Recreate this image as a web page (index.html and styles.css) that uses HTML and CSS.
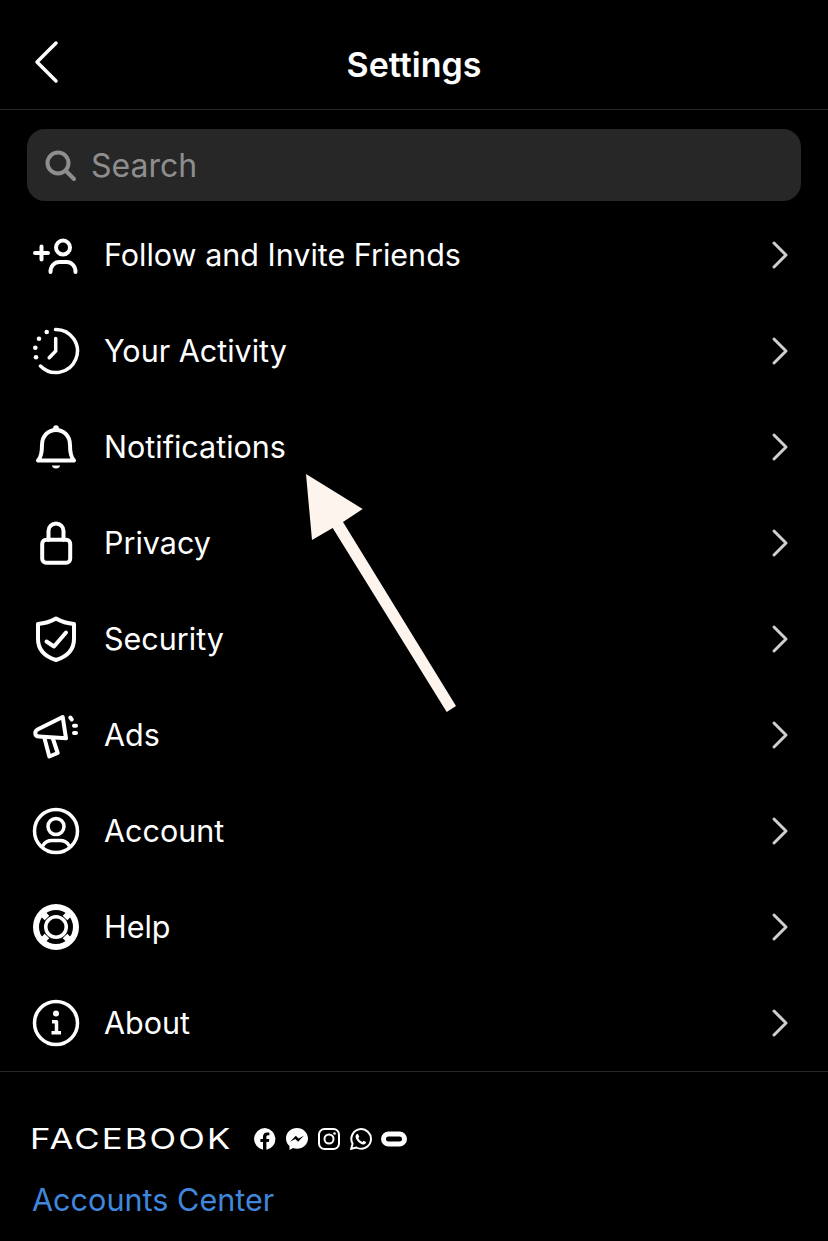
FILE: index.html
```html
<!DOCTYPE html>
<html lang="en">
<head>
    <meta charset="UTF-8">
    <title>Settings</title>
    <link rel="stylesheet" href="styles.css">
</head>
<body>
    <div class="screen">
        <header class="topbar">
            <svg class="back" width="30" height="48" viewBox="0 0 30 48"><path d="M25 4 6 23l19 19"/></svg>
            <h1 class="title">Settings</h1>
        </header>

        <div class="search">
            <svg class="search-icon" width="34" height="34" viewBox="0 0 34 34"><circle cx="15" cy="15" r="10.5"/><path d="M23 23l8 8"/></svg>
            <span class="search-text">Search</span>
        </div>

        <ul class="menu">
            <li class="row">
                <svg class="ico heavy" viewBox="0 0 48 48"><path d="M3 22h13M9.500 15.500v13"/><circle cx="31" cy="16.500" r="7"/><path d="M18.500 41c0-6 4-10 9-10h7c5 0 9 4 9 10"/></svg>
                <span class="label">Follow and Invite Friends</span>
                <svg class="chev" width="18" height="30" viewBox="0 0 18 30"><path d="M3 3l12 12L3 27"/></svg>
            </li>
            <li class="row">
                <svg class="ico" viewBox="0 0 48 48"><path d="M23.500 2.500A21.500 21.500 0 1 1 8.500 39"/><path d="M23.700 11.500v12.500l-6.500 6.700"/><g class="dots"><circle cx="14.700" cy="5" r="2.300"/><circle cx="7" cy="11.700" r="2.300"/><circle cx="3.300" cy="20.700" r="2.300"/><circle cx="4" cy="30.300" r="2.300"/></g></svg>
                <span class="label">Your Activity</span>
                <svg class="chev" width="18" height="30" viewBox="0 0 18 30"><path d="M3 3l12 12L3 27"/></svg>
            </li>
            <li class="row">
                <svg class="ico heavy" viewBox="0 0 48 48"><path d="M6 37.500h36M6 37.500c3-3 4-8 4-15.500C10 13 16 7 24 7s14 6 14 15c0 7.500 1 12.500 4 15.500"/><g class="dots"><circle cx="24" cy="5" r="2.800"/><path d="M20 42.500h8c0 2-2 3-4 3s-4-1-4-3z"/></g></svg>
                <span class="label">Notifications</span>
                <svg class="chev" width="18" height="30" viewBox="0 0 18 30"><path d="M3 3l12 12L3 27"/></svg>
            </li>
            <li class="row">
                <svg class="ico heavy" viewBox="0 0 48 48"><rect x="10.200" y="20.800" width="28" height="23" rx="4"/><path d="M16.500 20.800V12a7.500 7.500 0 0 1 15 0v8.800"/></svg>
                <span class="label">Privacy</span>
                <svg class="chev" width="18" height="30" viewBox="0 0 18 30"><path d="M3 3l12 12L3 27"/></svg>
            </li>
            <li class="row">
                <svg class="ico heavy" viewBox="0 0 48 48"><path d="M24 3.500c6 3.500 12 5 18 5.500v15c0 11-7 17.500-18 21C13 41.500 6 35 6 24V9c6-.5 12-2 18-5.500z"/><path d="M14.500 26.500l7.500 5 12-14"/></svg>
                <span class="label">Security</span>
                <svg class="chev" width="18" height="30" viewBox="0 0 18 30"><path d="M3 3l12 12L3 27"/></svg>
            </li>
            <li class="row">
                <svg class="ico heavy" viewBox="0 0 48 48"><path d="M30.700 6 6 18.300c-4 2.200-3.500 7 1 7.300l27 1.700z"/><path d="M12.300 26.500l5 19 8.400-3.500-5-15"/><path d="M38.300 6.500l1.500 2M42 14.700h2M42 22h2"/></svg>
                <span class="label">Ads</span>
                <svg class="chev" width="18" height="30" viewBox="0 0 18 30"><path d="M3 3l12 12L3 27"/></svg>
            </li>
            <li class="row">
                <svg class="ico" viewBox="0 0 48 48"><circle cx="24" cy="24" r="21.500"/><circle cx="24" cy="19.500" r="8"/><path d="M11 38.500c2-3.500 6-5 9-5h8c3 0 7 1.500 9 5"/></svg>
                <span class="label">Account</span>
                <svg class="chev" width="18" height="30" viewBox="0 0 18 30"><path d="M3 3l12 12L3 27"/></svg>
            </li>
            <li class="row">
                <svg class="ico" viewBox="0 0 48 48"><circle class="ring-out" cx="24" cy="24" r="20"/><circle class="ring-in" cx="24" cy="24" r="10.250"/><path class="spoke" d="M15 15l-6-6M33 15l6-6M15 33l-6 6M33 33l6 6"/></svg>
                <span class="label">Help</span>
                <svg class="chev" width="18" height="30" viewBox="0 0 18 30"><path d="M3 3l12 12L3 27"/></svg>
            </li>
            <li class="row">
                <svg class="ico" viewBox="0 0 48 48"><circle cx="24" cy="24" r="21.500"/><circle class="fill" cx="24" cy="14.500" r="3"/><path class="thick" d="M20 22.700h4.500v11M19.500 33.700h9.500"/></svg>
                <span class="label">About</span>
                <svg class="chev" width="18" height="30" viewBox="0 0 18 30"><path d="M3 3l12 12L3 27"/></svg>
            </li>
        </ul>

        <footer class="foot">
            <div class="brand">
                <span class="wordmark">FACEBOOK</span>
                <div class="apps">
                    <svg width="22" height="22" viewBox="0 0 22 22"><path class="solid" d="M11 0a11 11 0 0 0-2 21.800v-7.700H6.400V11H9V8.700c0-2.700 1.600-4.200 4-4.200 1.200 0 2.400.2 2.400.2v2.600h-1.300c-1.300 0-1.700.8-1.700 1.600V11h2.900l-.5 3.100h-2.400v7.700A11 11 0 0 0 11 0z"/></svg>
                    <svg width="22" height="22" viewBox="0 0 22 22"><path class="solid" fill-rule="evenodd" d="M11 0C4.900 0 0 4.600 0 10.500c0 3.100 1.300 5.800 3.500 7.600V22l3.500-1.900c1.300.4 2.600.6 4 .6 6.100 0 11-4.600 11-10.200S17.100 0 11 0zm1.100 13.800L9.300 10.900l-5.200 2.900 5.700-6.100 2.800 2.900 5.200-2.900z"/></svg>
                    <svg width="22" height="22" viewBox="0 0 22 22"><rect class="line" x="1" y="1" width="20" height="20" rx="5.500"/><circle class="line" cx="11" cy="11" r="4.500"/><circle class="solid" cx="16.500" cy="5.500" r="1.300"/></svg>
                    <svg width="22" height="22" viewBox="0 0 22 22"><path class="line" d="M1.200 20.800l1.400-5.100A9.800 9.800 0 1 1 6.400 19.500z"/><path class="solid" d="M7.800 5.800c-.5 0-1 .2-1.500.8-.6.700-.8 1.600-.7 2.500.3 2.700 3.800 6.600 7 7.300 1.100.2 2.100 0 2.800-.7.400-.4.600-1 .6-1.600l-2.500-1.300-1.100 1.200c-1.800-.6-3.400-2.200-4.100-4l1-1.200z"/></svg>
                    <svg class="oculus-logo" width="26" height="22" viewBox="0 0 26 22"><rect class="oculus" x="2.500" y="6" width="21" height="10" rx="5"/></svg>
                </div>
            </div>
            <a class="center-link">Accounts Center</a>
        </footer>

        <svg class="pointer" width="828" height="1241" viewBox="0 0 828 1241"><path d="M306 474 362.700 509 343 522 456 706 446.700 712 332.700 528 312 540z"/></svg>
    </div>
</body>
</html>
```

FILE: styles.css
```css
html,
body {
  margin: 0;
  padding: 0;
  background: #000;
}
.screen {
  position: relative;
  width: 828px;
  height: 1241px;
  overflow: hidden;
  background: #000;
  color: #fff;
  font-family: "Inter", "Liberation Sans", sans-serif;
}

/* top bar */
.topbar {
  box-sizing: border-box;
  height: 110px;
  border-bottom: 1px solid #262626;
  display: grid;
  grid-template-columns: 1fr auto 1fr;
  align-items: center;
  padding: 20px 32px 0;
}
.back {
  fill: none;
  stroke: #fff;
  stroke-width: 3.5;
  stroke-linecap: round;
  stroke-linejoin: round;
  margin-bottom: 4px;
  margin-left: -1px;
}
.title {
  grid-column: 2;
  margin: 0;
  font-size: 34px;
  font-weight: 600;
}

/* search */
.search {
  height: 72px;
  margin: 19px 27px 6px;
  border-radius: 18px;
  background: #272727;
  display: flex;
  align-items: center;
  gap: 14px;
  padding-left: 16px;
}
.search-icon {
  fill: none;
  stroke: #8e8e8e;
  stroke-width: 4;
  stroke-linecap: round;
}
.search-text {
  font-size: 32px;
  color: #8e8e8e;
}

/* menu */
.menu {
  list-style: none;
  margin: 0;
  padding: 0;
  border-bottom: 1px solid #262626;
}
.row {
  height: 96px;
  display: flex;
  align-items: center;
  padding: 0 39px 0 32px;
}
.ico {
  width: 48px;
  height: 48px;
  flex: none;
  fill: none;
  stroke: #fff;
  stroke-width: 3.500;
  stroke-linecap: round;
  stroke-linejoin: round;
}
.ico.heavy {
  stroke-width: 4;
}
.ico .dots,
.ico .fill {
  fill: #fff;
  stroke: none;
}
.ico .ring-out {
  stroke-width: 6;
}
.ico .ring-in {
  stroke-width: 3.500;
}
.ico .spoke {
  stroke-width: 6.500;
  stroke-linecap: butt;
}
.ico .thick {
  stroke-width: 3.500;
  stroke-linecap: butt;
}
.label {
  flex: 1;
  margin-left: 24px;
  margin-bottom: 2px;
  font-size: 30.500px;
  font-weight: 400;
}
.chev {
  fill: none;
  stroke: #cfcfcf;
  stroke-width: 3;
  stroke-linecap: round;
  stroke-linejoin: round;
}

/* footer */
.foot {
  padding: 56px 32px 0;
}
.brand {
  display: flex;
  align-items: center;
  height: 22px;
}
.wordmark {
  width: 222px;
  margin-left: -2px;
  margin-right: 2px;
  font-size: 28px;
  font-weight: 400;
  letter-spacing: 1.700px;
  line-height: 22px;
  transform: scaleX(1.24);
  transform-origin: left center;
}
.apps {
  display: flex;
  align-items: center;
  gap: 10px;
}
.apps svg {
  display: block;
}
.apps .oculus-logo {
  margin-left: -1px;
}
.apps .solid {
  fill: #fff;
}
.apps .line {
  fill: none;
  stroke: #fff;
  stroke-width: 2;
}
.apps .oculus {
  fill: none;
  stroke: #fff;
  stroke-width: 5;
}
.center-link {
  display: block;
  margin-top: 31px;
  font-size: 30.600px;
  line-height: 38px;
  color: #4086dc;
}

/* annotation arrow */
.pointer {
  position: absolute;
  left: 0;
  top: 0;
  fill: #fdf4ee;
  pointer-events: none;
}
```
